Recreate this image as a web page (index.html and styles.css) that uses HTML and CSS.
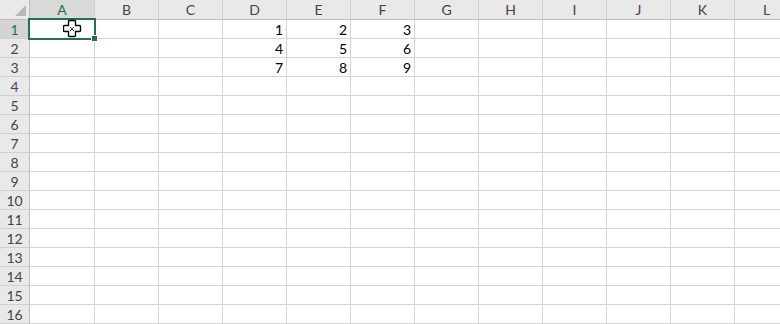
FILE: index.html
```html
<!DOCTYPE html>
<html lang="en">
<head>
    <meta charset="UTF-8">
    <title>Book1 - Excel</title>
    <link rel="stylesheet" href="styles.css">
</head>
<body>
    <div class="sheet">
        <div class="row head">
            <div class="corner"><span class="tri"></span></div>
            <div class="ch wide active">A</div>
            <div class="ch">B</div>
            <div class="ch">C</div>
            <div class="ch">D</div>
            <div class="ch">E</div>
            <div class="ch">F</div>
            <div class="ch">G</div>
            <div class="ch">H</div>
            <div class="ch">I</div>
            <div class="ch">J</div>
            <div class="ch">K</div>
            <div class="ch">L</div>
        </div>
        <div class="row">
            <div class="rh active">1</div>
            <div class="cell wide selected">
                <span class="handle"></span>
                <svg class="cursor" width="19" height="19" viewBox="0 0 19 19">
                    <path d="M6.5,1.5 H11.5 Q12.5,1.5 12.5,2.5 V6.5 H16.5 Q17.5,6.5 17.5,7.5 V11.5 Q17.5,12.5 16.5,12.5 H12.5 V16.5 Q12.5,17.5 11.5,17.5 H6.5 Q5.5,17.5 5.5,16.5 V12.5 H1.5 Q0.5,12.5 0.5,11.5 V7.5 Q0.5,6.5 1.5,6.5 H5.5 V2.5 Q5.5,1.5 6.5,1.5 Z" fill="#fff" stroke="#000" stroke-width="1.4"/>
                    <path d="M7,8 L11,12 M11,8 L7,12" stroke="#333" stroke-width="1"/>
                </svg>
            </div>
            <div class="cell"></div><div class="cell"></div>
            <div class="cell num">1</div><div class="cell num">2</div><div class="cell num">3</div>
            <div class="cell"></div><div class="cell"></div><div class="cell"></div><div class="cell"></div><div class="cell"></div><div class="cell"></div>
        </div>
        <div class="row">
            <div class="rh">2</div>
            <div class="cell wide"></div><div class="cell"></div><div class="cell"></div>
            <div class="cell num">4</div><div class="cell num">5</div><div class="cell num">6</div>
            <div class="cell"></div><div class="cell"></div><div class="cell"></div><div class="cell"></div><div class="cell"></div><div class="cell"></div>
        </div>
        <div class="row">
            <div class="rh">3</div>
            <div class="cell wide"></div><div class="cell"></div><div class="cell"></div>
            <div class="cell num">7</div><div class="cell num">8</div><div class="cell num">9</div>
            <div class="cell"></div><div class="cell"></div><div class="cell"></div><div class="cell"></div><div class="cell"></div><div class="cell"></div>
        </div>
        <div class="row">
            <div class="rh">4</div>
            <div class="cell wide"></div><div class="cell"></div><div class="cell"></div><div class="cell"></div><div class="cell"></div><div class="cell"></div>
            <div class="cell"></div><div class="cell"></div><div class="cell"></div><div class="cell"></div><div class="cell"></div><div class="cell"></div>
        </div>
        <div class="row">
            <div class="rh">5</div>
            <div class="cell wide"></div><div class="cell"></div><div class="cell"></div><div class="cell"></div><div class="cell"></div><div class="cell"></div>
            <div class="cell"></div><div class="cell"></div><div class="cell"></div><div class="cell"></div><div class="cell"></div><div class="cell"></div>
        </div>
        <div class="row">
            <div class="rh">6</div>
            <div class="cell wide"></div><div class="cell"></div><div class="cell"></div><div class="cell"></div><div class="cell"></div><div class="cell"></div>
            <div class="cell"></div><div class="cell"></div><div class="cell"></div><div class="cell"></div><div class="cell"></div><div class="cell"></div>
        </div>
        <div class="row">
            <div class="rh">7</div>
            <div class="cell wide"></div><div class="cell"></div><div class="cell"></div><div class="cell"></div><div class="cell"></div><div class="cell"></div>
            <div class="cell"></div><div class="cell"></div><div class="cell"></div><div class="cell"></div><div class="cell"></div><div class="cell"></div>
        </div>
        <div class="row">
            <div class="rh">8</div>
            <div class="cell wide"></div><div class="cell"></div><div class="cell"></div><div class="cell"></div><div class="cell"></div><div class="cell"></div>
            <div class="cell"></div><div class="cell"></div><div class="cell"></div><div class="cell"></div><div class="cell"></div><div class="cell"></div>
        </div>
        <div class="row">
            <div class="rh">9</div>
            <div class="cell wide"></div><div class="cell"></div><div class="cell"></div><div class="cell"></div><div class="cell"></div><div class="cell"></div>
            <div class="cell"></div><div class="cell"></div><div class="cell"></div><div class="cell"></div><div class="cell"></div><div class="cell"></div>
        </div>
        <div class="row">
            <div class="rh">10</div>
            <div class="cell wide"></div><div class="cell"></div><div class="cell"></div><div class="cell"></div><div class="cell"></div><div class="cell"></div>
            <div class="cell"></div><div class="cell"></div><div class="cell"></div><div class="cell"></div><div class="cell"></div><div class="cell"></div>
        </div>
        <div class="row">
            <div class="rh">11</div>
            <div class="cell wide"></div><div class="cell"></div><div class="cell"></div><div class="cell"></div><div class="cell"></div><div class="cell"></div>
            <div class="cell"></div><div class="cell"></div><div class="cell"></div><div class="cell"></div><div class="cell"></div><div class="cell"></div>
        </div>
        <div class="row">
            <div class="rh">12</div>
            <div class="cell wide"></div><div class="cell"></div><div class="cell"></div><div class="cell"></div><div class="cell"></div><div class="cell"></div>
            <div class="cell"></div><div class="cell"></div><div class="cell"></div><div class="cell"></div><div class="cell"></div><div class="cell"></div>
        </div>
        <div class="row">
            <div class="rh">13</div>
            <div class="cell wide"></div><div class="cell"></div><div class="cell"></div><div class="cell"></div><div class="cell"></div><div class="cell"></div>
            <div class="cell"></div><div class="cell"></div><div class="cell"></div><div class="cell"></div><div class="cell"></div><div class="cell"></div>
        </div>
        <div class="row">
            <div class="rh">14</div>
            <div class="cell wide"></div><div class="cell"></div><div class="cell"></div><div class="cell"></div><div class="cell"></div><div class="cell"></div>
            <div class="cell"></div><div class="cell"></div><div class="cell"></div><div class="cell"></div><div class="cell"></div><div class="cell"></div>
        </div>
        <div class="row">
            <div class="rh">15</div>
            <div class="cell wide"></div><div class="cell"></div><div class="cell"></div><div class="cell"></div><div class="cell"></div><div class="cell"></div>
            <div class="cell"></div><div class="cell"></div><div class="cell"></div><div class="cell"></div><div class="cell"></div><div class="cell"></div>
        </div>
        <div class="row">
            <div class="rh">16</div>
            <div class="cell wide"></div><div class="cell"></div><div class="cell"></div><div class="cell"></div><div class="cell"></div><div class="cell"></div>
            <div class="cell"></div><div class="cell"></div><div class="cell"></div><div class="cell"></div><div class="cell"></div><div class="cell"></div>
        </div>
    </div>
</body>
</html>
```
FILE: styles.css
```css
html, body {
    margin: 0;
    padding: 0;
    background: #ffffff;
    overflow: hidden;
}

.sheet {
    width: 800px;
    font-family: Lato, "Open Sans", sans-serif;
    font-size: 14px;
    color: #000;
}

.row {
    display: flex;
    height: 19px;
}

.row.head {
    height: 20px;
}

.row > div {
    box-sizing: border-box;
    flex: 0 0 64px;
    border-right: 1px solid #d4d4d4;
    border-bottom: 1px solid #d4d4d4;
}

.row > div.wide {
    flex-basis: 65px;
}

/* headers */
.corner,
.ch,
.rh {
    background: #e9e9e9;
    color: #444;
}

.head > div {
    border-right-color: #d0d0d0;
    border-bottom-color: #bdbdbd;
    text-align: center;
    line-height: 19px;
}

.row > .corner,
.row > .rh {
    flex-basis: 30px;
    border-right-color: #bdbdbd;
}

.corner {
    position: relative;
}

.tri {
    position: absolute;
    right: 3px;
    bottom: 3px;
    width: 0;
    height: 0;
    border-left: 11px solid transparent;
    border-bottom: 11px solid #b7b7b7;
}

.rh {
    text-align: center;
    line-height: 19px;
    border-bottom-color: #d0d0d0 !important;
}

.ch.active {
    background: #d9d9d9;
    color: #217346;
    border-bottom: 2px solid #217346 !important;
}

.rh.active {
    background: #d4d4d4;
    color: #217346;
}

/* cells */
.num {
    text-align: right;
    padding-right: 3px;
    line-height: 20px;
}

.selected {
    position: relative;
}

.selected::before {
    content: "";
    position: absolute;
    left: -2px;
    top: -2px;
    right: -2px;
    bottom: -2px;
    border: 2px solid #217346;
}

.handle {
    position: absolute;
    right: -4px;
    bottom: -4px;
    width: 5px;
    height: 5px;
    background: #217346;
    border: 1px solid #fff;
    z-index: 2;
}

.cursor {
    position: absolute;
    left: 33px;
    top: -1px;
    z-index: 3;
}
```
